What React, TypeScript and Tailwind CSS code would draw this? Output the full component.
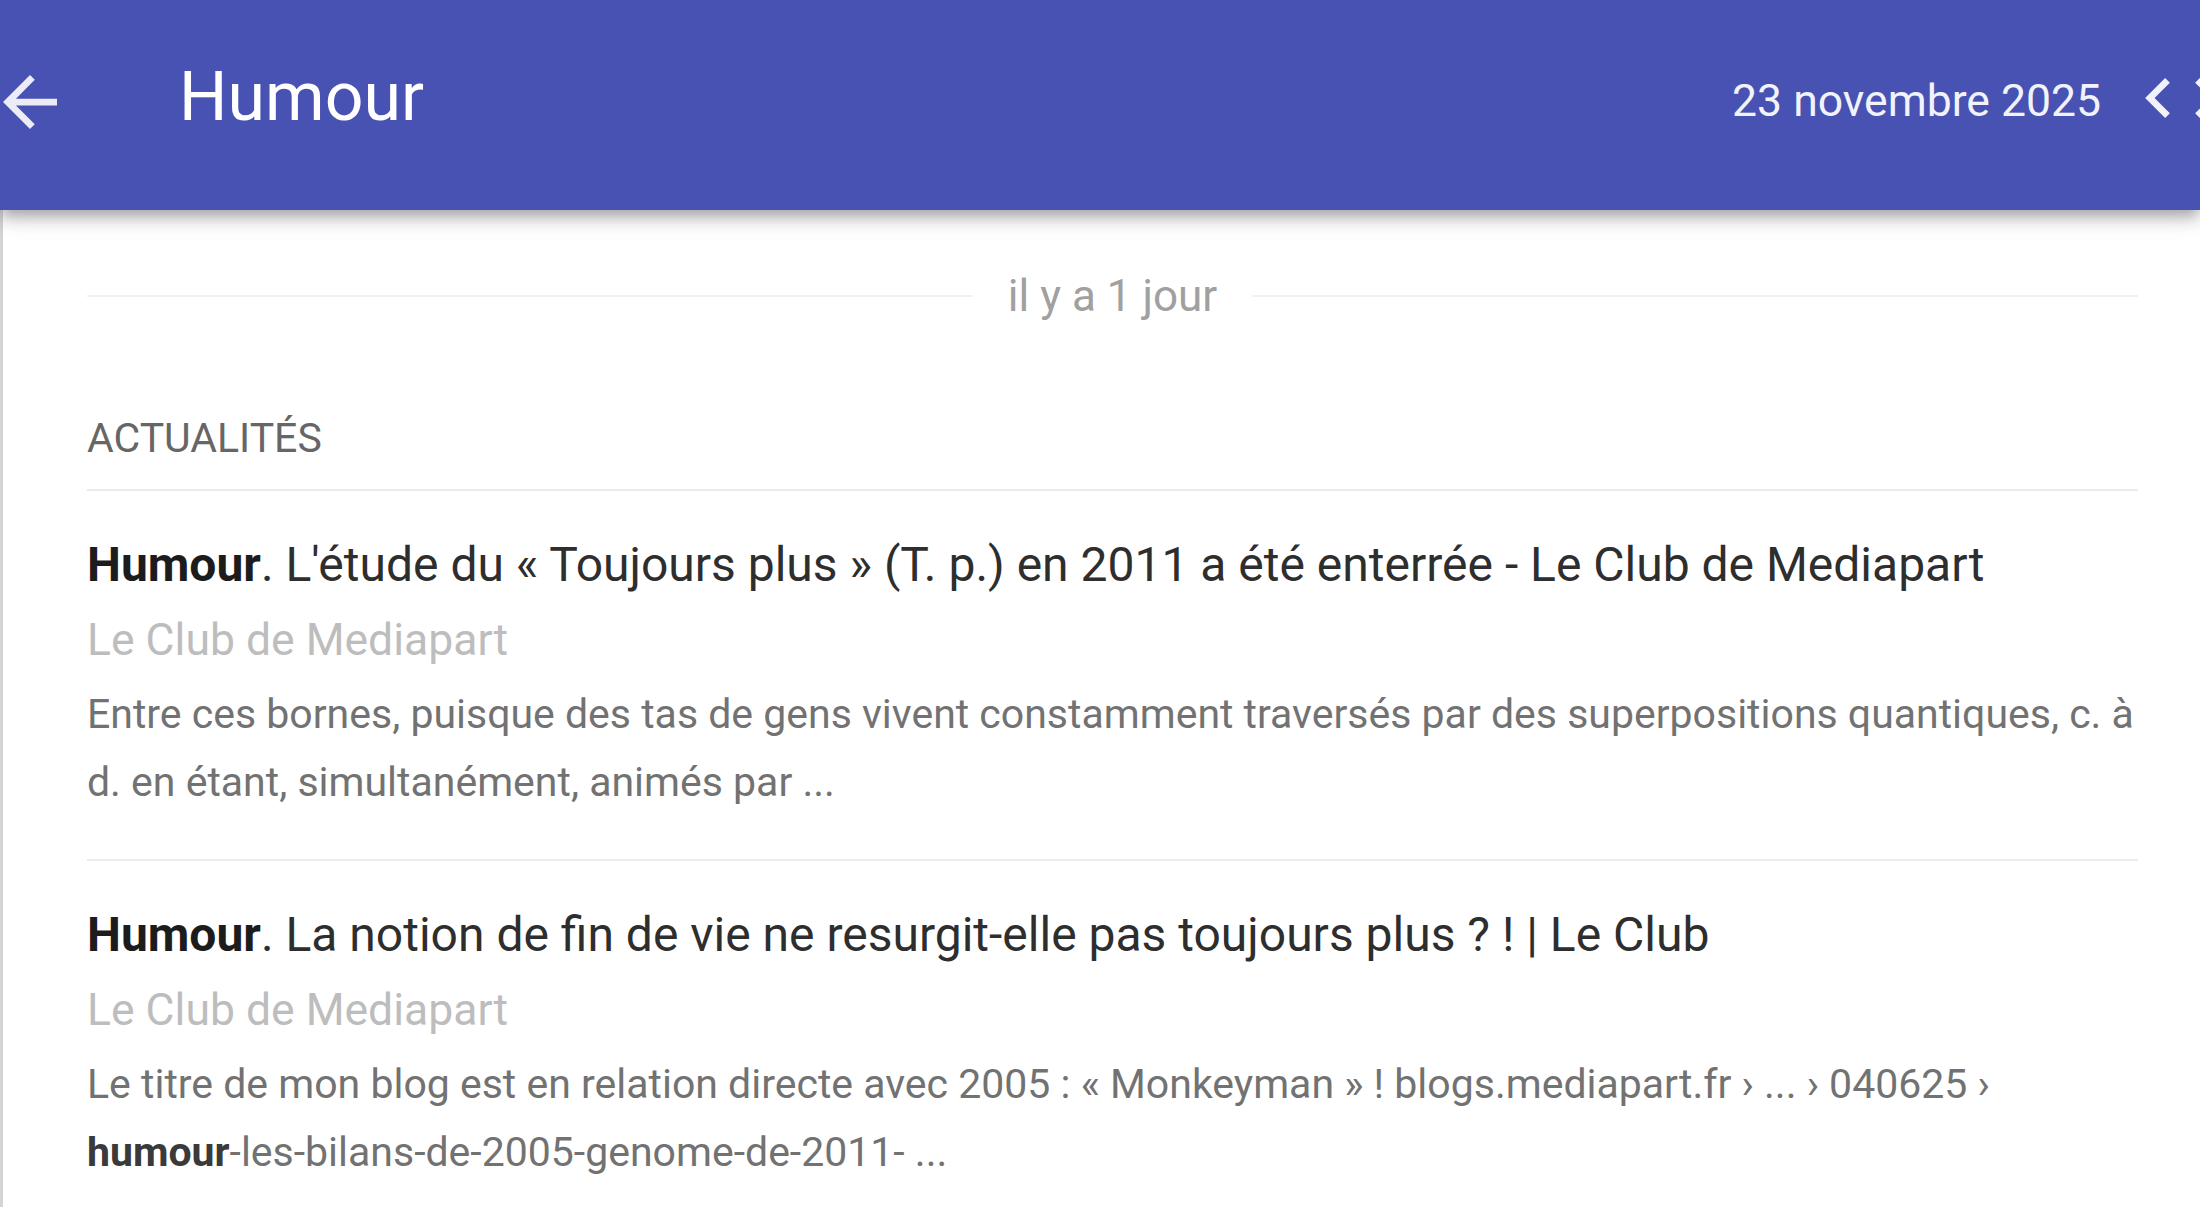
import React from "react";

function ArrowBack() {
  return (
    <svg viewBox="4 4 16 16" className="h-[54px] w-[54px] shrink-0" fill="currentColor">
      <path d="M20 11H7.83l5.59-5.59L12 4l-8 8 8 8 1.41-1.41L7.83 13H20v-2z" />
    </svg>
  );
}

function ChevronLeft() {
  return (
    <svg viewBox="8 6 7.41 12" className="h-[40px] w-[25px] shrink-0" fill="currentColor">
      <path d="M15.41 7.41L14 6l-6 6 6 6 1.41-1.41L10.83 12z" />
    </svg>
  );
}

function ChevronRight() {
  return (
    <svg viewBox="8.59 6 7.41 12" className="h-[40px] w-[25px] shrink-0" fill="currentColor">
      <path d="M10 6L8.59 7.41 13.17 12l-4.58 4.59L10 18l6-6z" />
    </svg>
  );
}

type Article = {
  title: string;
  source: string;
  desc: React.ReactNode;
};

const articles: Article[] = [
  {
    title: " L'étude du « Toujours plus » (T. p.) en 2011 a été enterrée - Le Club de Mediapart",
    source: "Le Club de Mediapart",
    desc: (
      <>
        Entre ces bornes, puisque des tas de gens vivent constamment traversés par des superpositions quantiques, c. à d. en
        étant, simultanément, animés par ...
      </>
    ),
  },
  {
    title: " La notion de fin de vie ne resurgit-elle pas toujours plus ? ! | Le Club",
    source: "Le Club de Mediapart",
    desc: (
      <>
        Le titre de mon blog est en relation directe avec 2005 : « Monkeyman » ! blogs.mediapart.fr › ... › 040625 ›{" "}
        <b className="font-bold text-[#3a3a3a]">humour</b>-les-bilans-de-2005-genome-de-2011- ...
      </>
    ),
  },
];

export default function App() {
  return (
    <div className="h-[1207px] w-[2200px] overflow-hidden bg-white font-['Roboto',sans-serif]">
      <header className="relative z-10 flex h-[210px] items-start overflow-hidden bg-[#4752b2] text-white shadow-[0_6px_11px_-3px_rgba(0,0,0,0.2),0_11px_14px_0_rgba(0,0,0,0.14),0_3px_28px_0_rgba(0,0,0,0.12)]">
        <div className="ml-[3px] mt-[75px] text-[#ececf7]">
          <ArrowBack />
        </div>
        <h1 className="ml-[122px] mt-[63px] text-[68px] font-normal leading-none">Humour</h1>
        <div className="ml-auto mr-[-20px] flex shrink-0 items-start">
          <span className="mt-[79px] text-[44.5px] font-normal leading-none text-[#f2f2fa]">23 novembre 2025</span>
          <div className="ml-[44px] mt-[78px] text-[#f2f2fa]">
            <ChevronLeft />
          </div>
          <div className="ml-[25px] mt-[78px] text-[#f2f2fa]">
            <ChevronRight />
          </div>
        </div>
      </header>

      <main className="h-[997px] border-l-[3px] border-[#d4d4d4] pl-[84px] pr-[62px] pt-[60px]">
        <div className="flex h-[52px] items-center gap-[35px]">
          <div className="h-[2px] flex-1 bg-[#f1f1f1]" />
          <span className="text-[44px] leading-[52px] text-[#a0a0a0]">il y a 1 jour</span>
          <div className="h-[2px] flex-1 bg-[#f1f1f1]" />
        </div>

        <div className="mt-[91px] border-b-2 border-[#ebebeb] pb-[26px] text-[41px] leading-[50px] text-[#666666]">
          ACTUALITÉS
        </div>

        {articles.map((a, i) => (
          <div key={i} className="border-b-2 border-[#ebebeb] pb-[43px] pt-[42px]">
            <div className="text-[48px] leading-[64px] text-[#2e2e2e]">
              <b className="font-bold text-[#1c1c1c]">Humour</b>.{a.title}
            </div>
            <div className="mt-[13px] text-[44.5px] leading-[60px] text-[#bdbdbd]">{a.source}</div>
            <div className="mt-[10px] text-[41px] leading-[68px] text-[#727272]">{a.desc}</div>
          </div>
        ))}
      </main>
    </div>
  );
}
